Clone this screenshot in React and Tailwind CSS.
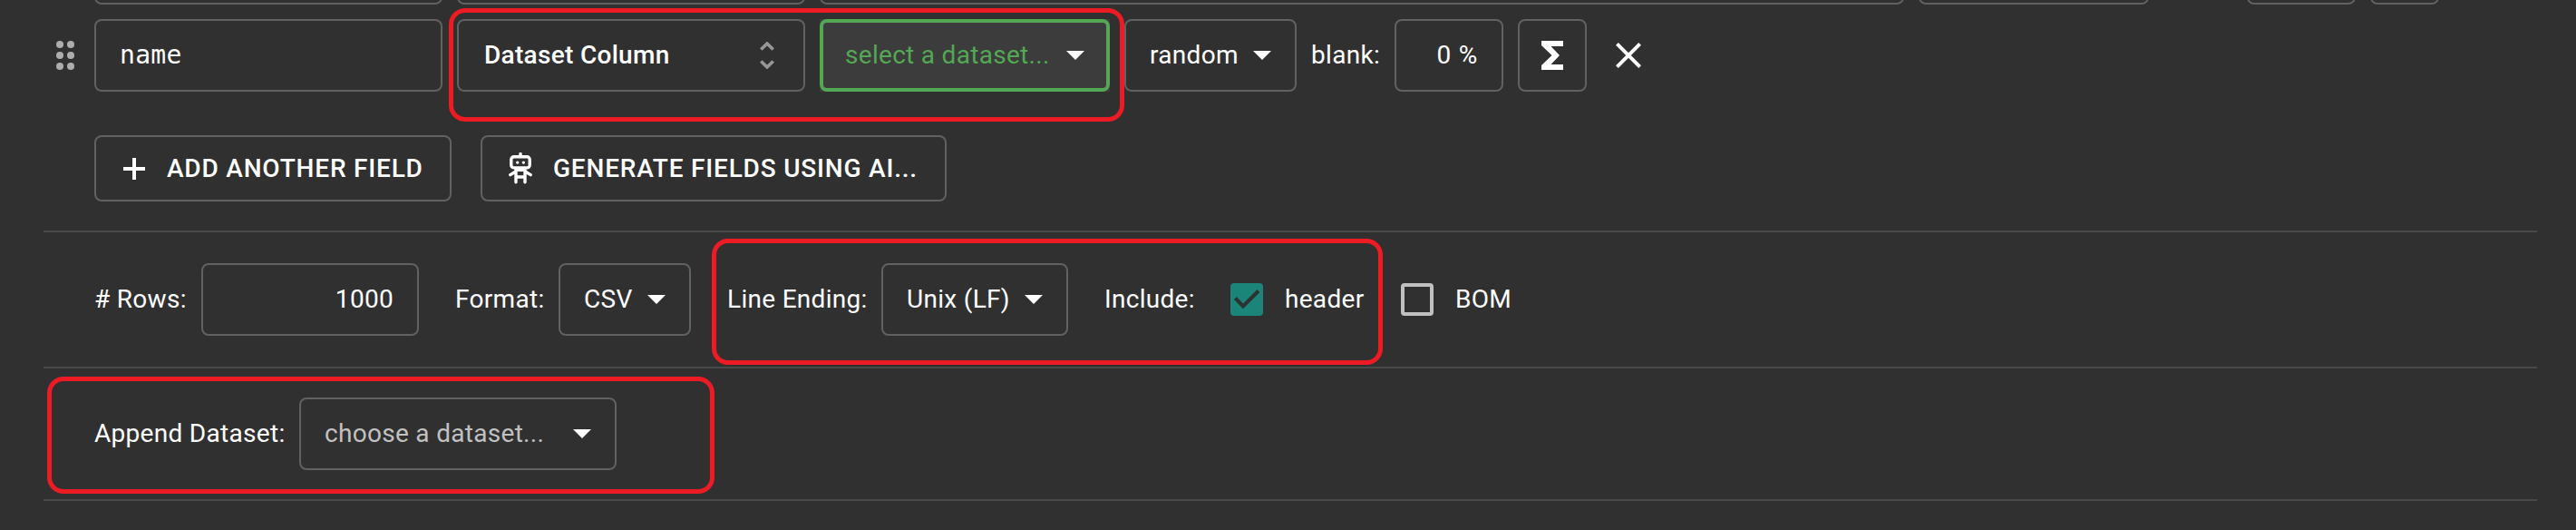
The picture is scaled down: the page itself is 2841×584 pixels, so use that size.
function Caret({ className = '' }) {
  return (
    <svg width="20" height="10" viewBox="0 0 20 10" className={`shrink-0 ${className}`}>
      <path d="M0 0H20L10 10Z" fill="#fff" />
    </svg>
  );
}

function Box({ className = '', children }) {
  return (
    <div className={`flex h-20 shrink-0 items-center rounded-lg border-2 border-[#616161] whitespace-nowrap ${className}`}>
      {children}
    </div>
  );
}

function Label({ className = '', children }) {
  return <div className={`shrink-0 whitespace-nowrap ${className}`}>{children}</div>;
}

function Mark({ className = '' }) {
  return <div className={`pointer-events-none absolute rounded-[18px] border-5 border-[#ed1c24] ${className}`} />;
}

export default function App() {
  return (
    <div className="relative h-[584px] w-[2841px] overflow-hidden bg-[#303030] font-['Roboto',sans-serif] text-[28px] leading-10 tracking-[0.3px] text-white">
      <div className="flex h-[5px] items-end pl-[104px]">
        <Box className="w-96" />
        <Box className="ml-4 w-96" />
        <Box className="ml-4 w-[1196px]" />
        <Box className="ml-4 w-[254px]" />
        <Box className="ml-[108px] w-[120px]" />
        <Box className="ml-4 w-[76px]" />
      </div>

      <div className="mt-4 flex h-20 items-center pl-[62px]">
        <svg width="20" height="32" viewBox="0 0 20 32" className="mr-[22px] shrink-0" fill="#adadad">
          <circle cx="4" cy="4" r="4" /><circle cx="16" cy="4" r="4" />
          <circle cx="4" cy="16" r="4" /><circle cx="16" cy="16" r="4" />
          <circle cx="4" cy="28" r="4" /><circle cx="16" cy="28" r="4" />
        </svg>
        <Box className="w-96 pl-[26px] font-['DejaVu_Sans_Mono',monospace] tracking-[0.3px]">name</Box>
        <Box className="ml-4 w-96 justify-between pr-8 pl-7 font-medium">
          Dataset Column
          <svg width="16" height="30" viewBox="0 0 16 30" fill="none" stroke="#979797" strokeWidth="3.6">
            <path d="M1.3 8.5L8 2L14.7 8.5M1.3 21.5L8 28L14.7 21.5" />
          </svg>
        </Box>
        <div className="ml-4 shrink-0 bg-[#3c3c3c]">
          <div className="flex h-20 w-80 items-center justify-between rounded-lg border-4 border-[#54a754] pr-6 pl-6 whitespace-nowrap text-[#54a754]">
            select a dataset...
            <Caret />
          </div>
        </div>
        <Box className="ml-4 w-[190px] justify-between pr-[26px] pl-[26px]">random<Caret /></Box>
        <Label className="ml-4 w-[92px]">blank:</Label>
        <Box className="w-[120px] justify-end pr-[26px] tracking-[0.8px]">0 %</Box>
        <Box className="ml-4 w-[76px] justify-center">
          <svg width="24" height="32" viewBox="0 0 24 32" fill="#fff">
            <path d="M0 0H24V6H10.5L20 16L10.5 26H24V32H0V27L11.5 16L0 5Z" />
          </svg>
        </Box>
        <svg width="28" height="28" viewBox="0 0 28 28" className="ml-8 shrink-0" stroke="#fff" strokeWidth="4">
          <path d="M1.4 1.4L26.6 26.6M26.6 1.4L1.4 26.6" />
        </svg>
      </div>

      <div className="mt-12 flex pl-[104px] font-medium tracking-[0.8px]">
        <button className="flex h-[73px] w-[394px] items-center rounded-lg border-2 border-[#616161] pl-[30px] whitespace-nowrap">
          <svg width="24" height="24" viewBox="0 0 24 24" className="mr-6 shrink-0" stroke="#fff" strokeWidth="4">
            <path d="M12 0V24M0 12H24" />
          </svg>
          ADD ANOTHER FIELD
        </button>
        <button className="ml-8 flex h-[73px] w-[514px] items-center rounded-lg border-2 border-[#616161] pl-[29px] whitespace-nowrap">
          <svg width="26" height="36" viewBox="0 0 26 36" className="mr-[23px] shrink-0" fill="none" stroke="#fff" strokeWidth="3.4" strokeLinecap="round" strokeLinejoin="round">
            <path d="M13 1.5V4.5" />
            <rect x="2.8" y="4.7" width="20.4" height="12.2" rx="3" />
            <path d="M8 18.5V32.8M18 18.5V32.8M8 27H18M7 21.5L1.8 24.6M19 21.5L24.2 24.6M8 19.3H18" />
            <path d="M9.7 11.1H9.8M16.3 11.1H16.4" />
          </svg>
          GENERATE FIELDS USING AI...
        </button>
      </div>

      <div className="mt-8 mr-[43px] ml-12 flex h-[152px] items-center border-y-2 border-[#494949] pl-14">
        <Label className="w-[118px]"># Rows:</Label>
        <Box className="w-60 justify-end pr-[26px]">1000</Box>
        <Label className="ml-10 w-[114px]">Format:</Label>
        <Box className="w-[146px] justify-between px-[26px]">CSV<Caret /></Box>
        <Label className="ml-10 w-[170px]">Line Ending:</Label>
        <Box className="w-[206px] justify-between px-[26px]">Unix (LF)<Caret /></Box>
        <Label className="ml-10 w-[139px]">Include:</Label>
        <svg width="36" height="36" viewBox="0 0 36 36" className="shrink-0">
          <rect width="36" height="36" rx="4" fill="#1a8578" />
          <path d="M5.4 16.5L14 25.5L31 8.5" fill="none" stroke="#303030" strokeWidth="4" />
        </svg>
        <Label className="ml-6 w-32">header</Label>
        <div className="size-9 shrink-0 rounded-[4px] border-4 border-[#c1c1c1]" />
        <Label className="ml-6">BOM</Label>
      </div>

      <div className="mr-[43px] ml-12 flex h-[146px] items-center border-b-2 border-[#494949] pl-14">
        <Label className="w-[226px]">Append Dataset:</Label>
        <Box className="w-[350px] justify-between px-[26px] text-[#c1c1c1]">choose a dataset...<Caret /></Box>
      </div>

      <Mark className="top-[9px] left-[495px] h-[125px] w-[745px]" />
      <Mark className="top-[263px] left-[785px] h-[139px] w-[740px]" />
      <Mark className="top-[415px] left-[52px] h-[129px] w-[736px]" />
    </div>
  );
}
